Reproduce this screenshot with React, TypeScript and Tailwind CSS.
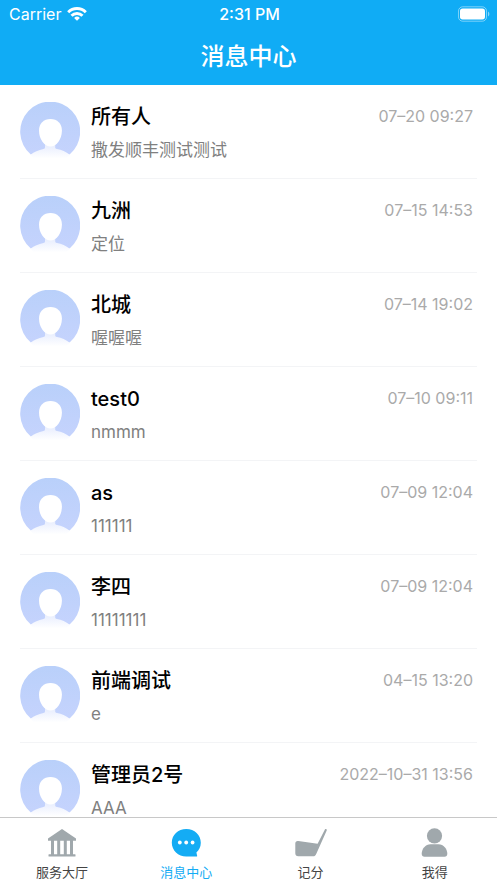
import { useState } from "react";

const messages = [
  { id: 1, name: "所有人", text: "撒发顺丰测试测试", time: "07–20 09:27" },
  { id: 2, name: "九洲", text: "定位", time: "07–15 14:53" },
  { id: 3, name: "北城", text: "喔喔喔", time: "07–14 19:02" },
  { id: 4, name: "test0", text: "nmmm", time: "07–10 09:11" },
  { id: 5, name: "as", text: "111111", time: "07–09 12:04" },
  { id: 6, name: "李四", text: "11111111", time: "07–09 12:04" },
  { id: 7, name: "前端调试", text: "e", time: "04–15 13:20" },
  { id: 8, name: "管理员2号", text: "AAA", time: "2022–10–31 13:56" },
];

const tabs = [
  { key: "hall", label: "服务大厅", Icon: HallIcon },
  { key: "messages", label: "消息中心", Icon: ChatIcon },
  { key: "score", label: "记分", Icon: ClubIcon },
  { key: "mine", label: "我得", Icon: UserIcon },
];

function WifiIcon() {
  return (
    <svg className="h-[14px] w-5" viewBox="0 0 20 14" fill="none" stroke="currentColor" strokeWidth="3">
      <path d="M1.2 5.2a12.6 12.6 0 0 1 17.6 0" />
      <path d="M4.5 8.7a7.8 7.8 0 0 1 11 0" />
      <path d="M10 13.8l-2.9-2.9a4.1 4.1 0 0 1 5.8 0z" fill="currentColor" stroke="none" />
    </svg>
  );
}

function BatteryIcon() {
  return (
    <svg className="h-4 w-8" viewBox="0 0 32 16" fill="none">
      <rect x="0.5" y="0.8" width="28" height="14.4" rx="4.2" stroke="white" strokeOpacity="0.45" />
      <rect x="2" y="2.6" width="25" height="10.8" rx="2.6" fill="white" />
      <path d="M30 5.5c1.8 0.8 1.8 4.2 0 5z" fill="white" fillOpacity="0.5" />
    </svg>
  );
}

function Avatar() {
  return (
    <svg className="size-[60px] shrink-0" viewBox="0 0 60 60">
      <defs>
        <linearGradient id="avatar-bg" x1="0" y1="0" x2="0" y2="1">
          <stop offset="0" stopColor="#b9d0fa" />
          <stop offset="1" stopColor="#c5d3fd" />
        </linearGradient>
        <linearGradient id="avatar-body" x1="0" y1="0" x2="0" y2="1">
          <stop offset="0" stopColor="#e6ecfe" />
          <stop offset="0.8" stopColor="#ffffff" />
        </linearGradient>
      </defs>
      <path d="M10.8 52.5A30 30 0 1 1 49.6 52.5L30 49z" fill="url(#avatar-bg)" />
      <path d="M25 42v3.2c0 1-0.6 1.5-1.6 1.7C18.5 47.8 14 49.8 10.6 52.7L17 60h26l6.8-7.3C46 49.5 41.5 47.7 37 46.9c-1.2-0.2-1.8-0.7-1.8-1.7V42z" fill="url(#avatar-body)" />
      <path d="M30.5 17c6.8 0 11.4 4.6 11.4 11.6 0 8.6-5.2 16-11.4 16S19 37.2 19 28.6C19 21.6 23.7 17 30.5 17z" fill="white" />
    </svg>
  );
}

function HallIcon() {
  return (
    <svg className="size-8" viewBox="0 0 32 32" fill="#a0a8ac">
      <path d="M16 2L30 11.500v2.300H2v-2.300z" />
      <path d="M5 13h3v16H5zM11.200 13h3v16h-3zM17.800 13h3v16h-3zM24 13h3v16h-3z" />
      <rect x="2.500" y="27.200" width="27" height="2.300" rx="0.500" />
    </svg>
  );
}

function ChatIcon() {
  return (
    <svg className="size-8" viewBox="0 0 32 32">
      <path d="M16.300 2c8.300 0 14.500 6 14.500 13.700 0 4-1.700 7.400-4.400 9.700l0.800 3.600c0.100 0.300-0.100 0.500-0.400 0.500H16.300C8.200 29.500 1.800 23.300 1.800 15.700S8 2 16.300 2z" fill="#14acf4" />
      <g fill="white">
        <circle cx="9.800" cy="15.500" r="1.900" />
        <circle cx="16.200" cy="15.500" r="1.900" />
        <circle cx="22.600" cy="15.500" r="1.900" />
      </g>
    </svg>
  );
}

function ClubIcon() {
  return (
    <svg className="size-8" viewBox="0 0 32 32" fill="#a0a8ac">
      <path d="M0.300 16.600c0-2 1.200-2.900 3-2.600L22.600 16.700L29.900 2.500c0.500-1 2.300-0.200 1.800 0.900L21.200 26.900c-0.700 1.600-1.500 2.300-3.100 2.300H3.300c-1.900 0-3-1-3-2.900z" />
    </svg>
  );
}

function UserIcon() {
  return (
    <svg className="size-8" viewBox="0 0 32 32" fill="#a0a8ac">
      <circle cx="15.500" cy="8.800" r="7.600" />
      <path d="M11.500 17.300h8c5 0 8.800 4.500 8.800 9.500 0 2-1 2.900-2.800 2.900h-20c-1.800 0-2.800-0.900-2.800-2.900 0-5 3.800-9.500 8.800-9.500z" />
    </svg>
  );
}

export default function App() {
  const [activeTab, setActiveTab] = useState("messages");

  return (
    <div className="flex h-screen flex-col bg-white font-['Inter','Noto_Sans_CJK_SC',sans-serif]">
      <header className="shrink-0 bg-[#10acf5] text-white">
        <div className="grid h-7 grid-cols-3 items-center pr-[7px] pl-[9px]">
          <div className="flex items-center gap-1.5 text-base">
            <span>Carrier</span>
            <WifiIcon />
          </div>
          <span className="text-center text-base font-medium">2:31 PM</span>
          <div className="flex justify-end">
            <BatteryIcon />
          </div>
        </div>
        <h1 className="flex h-[57px] items-center justify-center text-2xl font-medium">消息中心</h1>
      </header>

      <main className="min-h-0 flex-1 overflow-hidden">
        <ul className="px-5">
          {messages.map((message) => (
            <li key={message.id} className="flex h-[94px] gap-[11px] border-b border-gray-100 pt-[17px]">
              <Avatar />
              <div className="min-w-0 flex-1">
                <div className="flex items-start justify-between pr-1">
                  <h2 className="text-xl leading-[30px] font-medium text-black">{message.name}</h2>
                  <time className="text-base leading-7 text-[#aaa]">{message.time}</time>
                </div>
                <p className="mt-1 truncate text-[17px] leading-7 text-[#808080]">{message.text}</p>
              </div>
            </li>
          ))}
        </ul>
      </main>

      <nav className="grid h-[66px] shrink-0 grid-cols-4 border-t border-[#c8c8c8] bg-white">
        {tabs.map(({ key, label, Icon }) => (
          <button
            key={key}
            type="button"
            onClick={() => setActiveTab(key)}
            className={`flex flex-col items-center gap-[3px] pt-[9px] text-[13px] leading-5 ${
              activeTab === key ? "text-[#14acf4]" : "text-[#444]"
            }`}
          >
            <Icon />
            <span>{label}</span>
          </button>
        ))}
      </nav>
    </div>
  );
}
